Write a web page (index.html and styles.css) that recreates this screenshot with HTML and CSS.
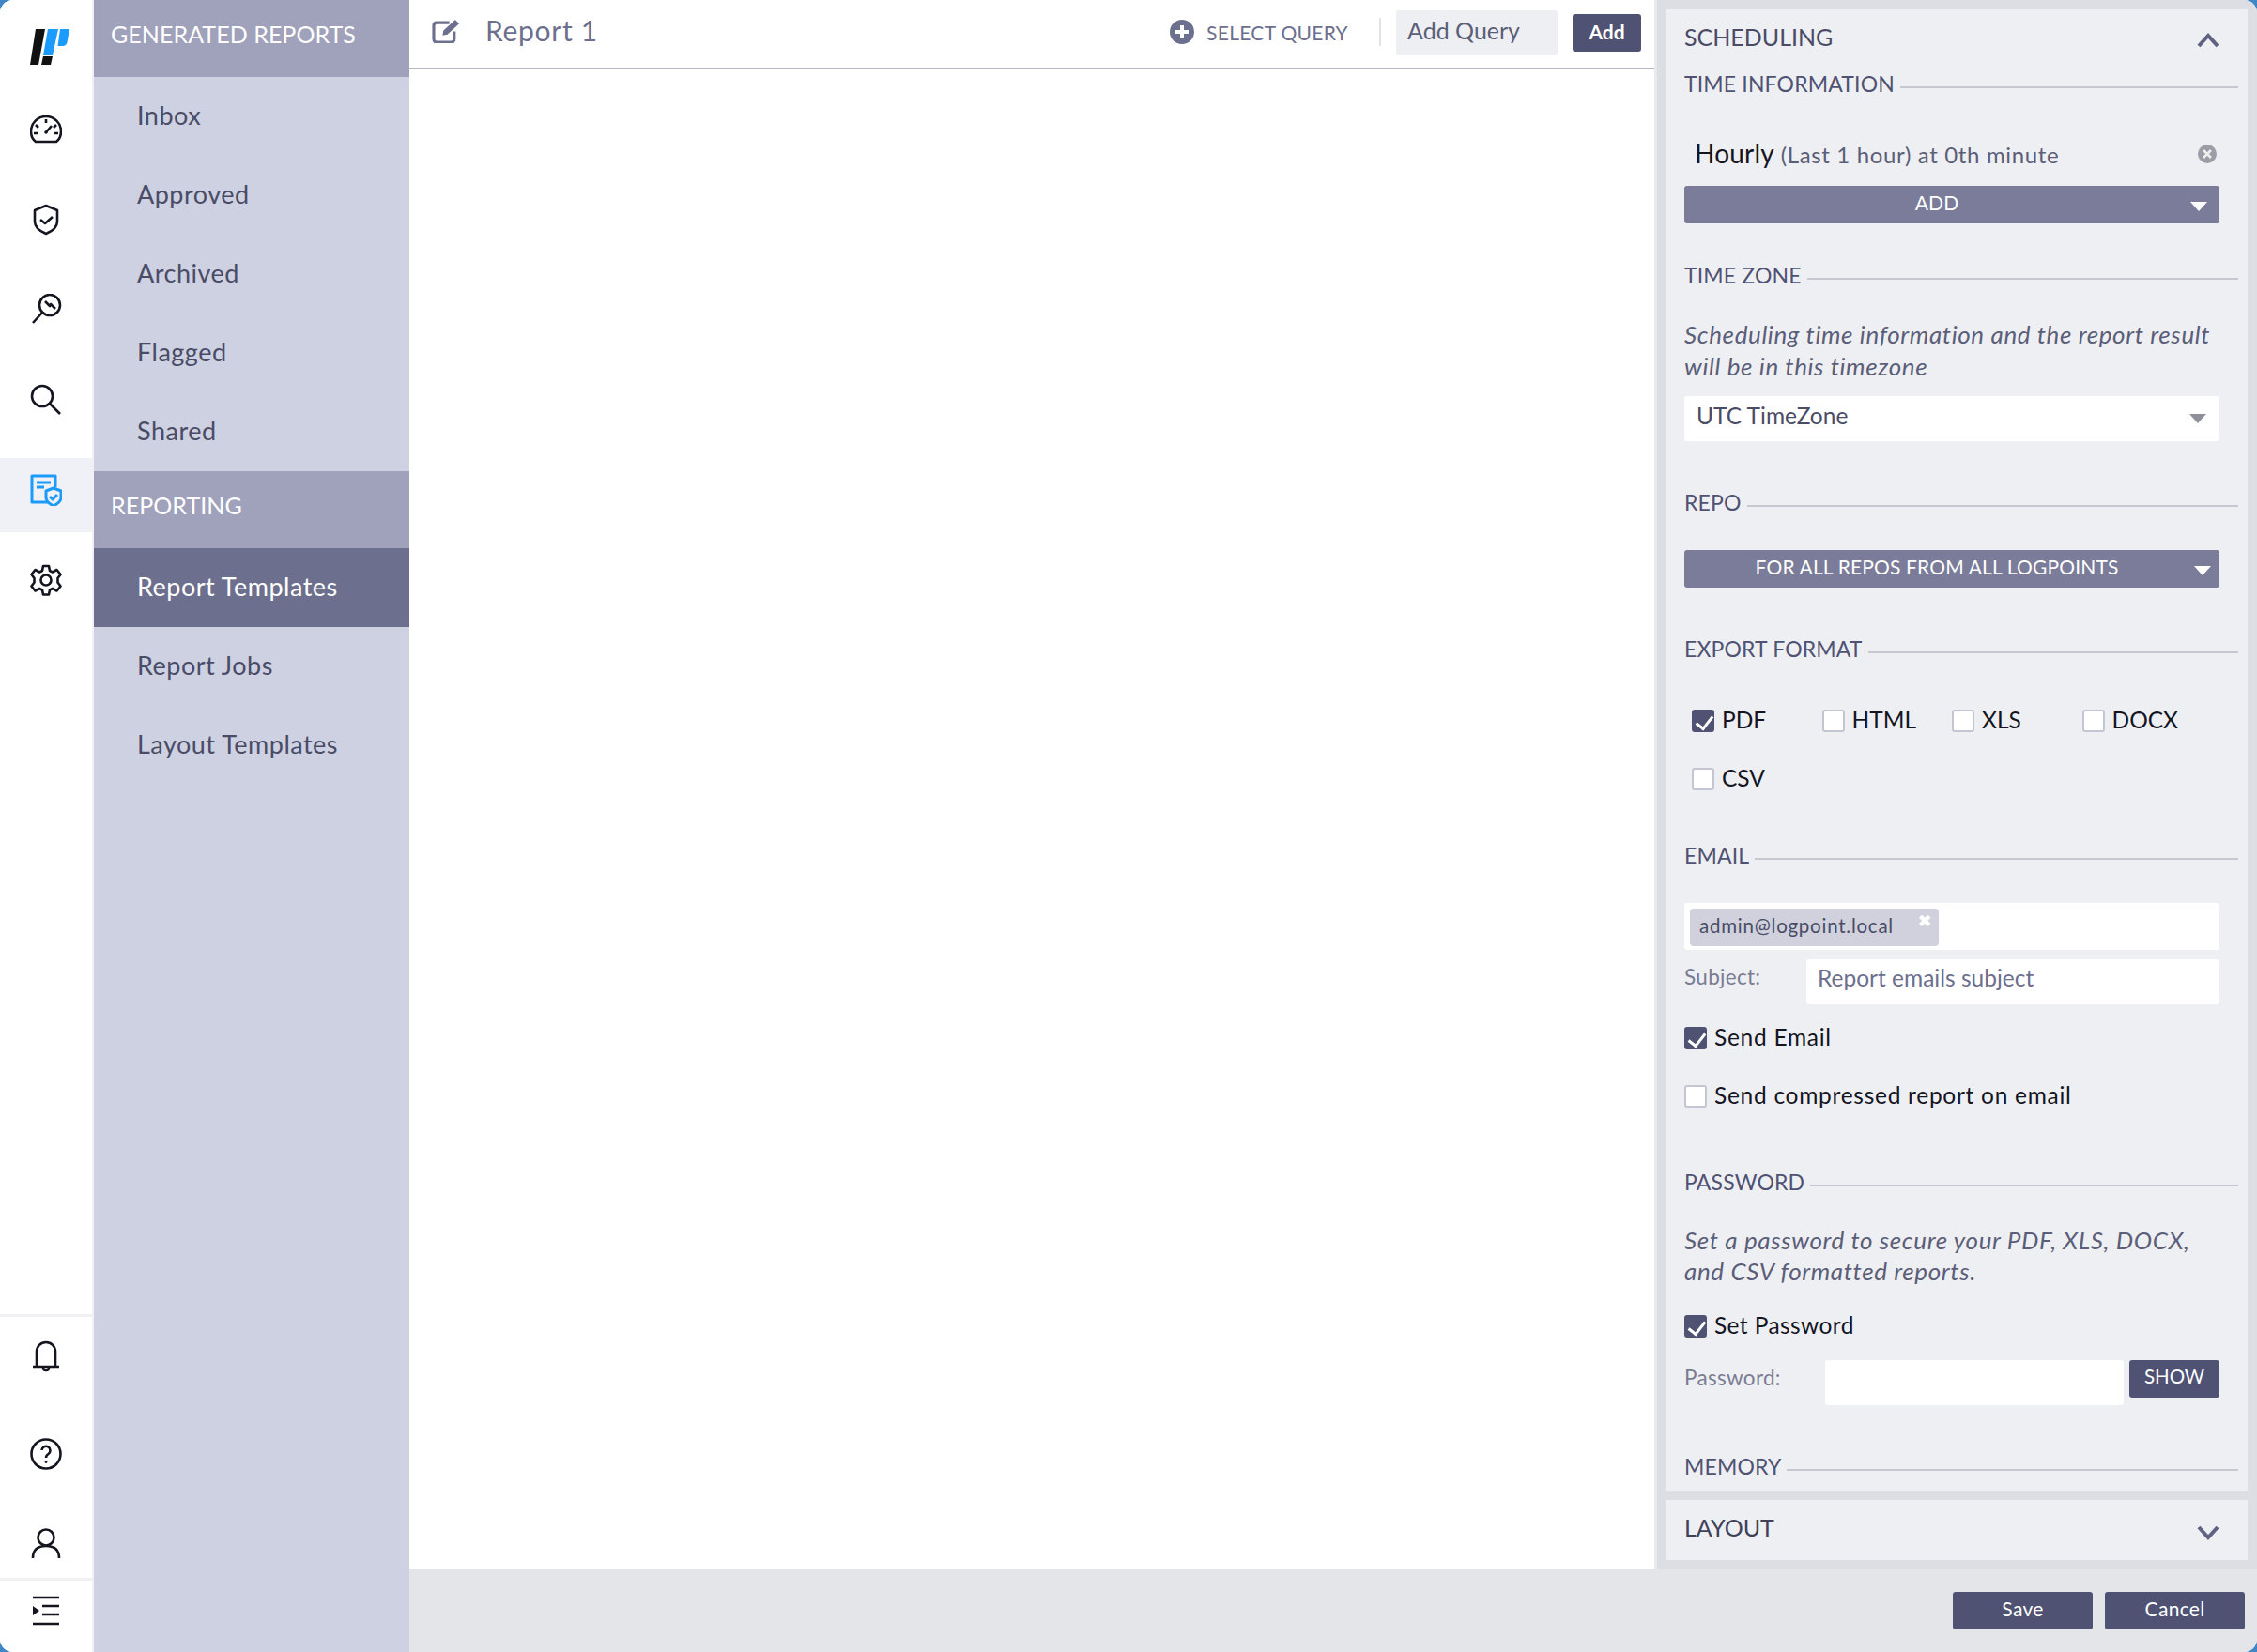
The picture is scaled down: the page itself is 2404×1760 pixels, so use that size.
FILE: index.html
```html
<!DOCTYPE html>
<html lang="en">
<head>
<meta charset="utf-8">
<title>Report 1</title>
<link rel="stylesheet" href="styles.css">
</head>
<body>
<div class="app">
  <nav class="rail">
    <div class="logo">
      <svg width="42" height="38" viewBox="0 0 42 38"><path d="M6 0h10L9 38H0z" fill="#111"/><path d="M19 0h11l-6 28H14z" fill="#1b9cfc"/><path d="M14 29h10l-2 9H12z" fill="#111"/><path d="M32 0h10l-2.500 14q-1 4-5 4h-5z" fill="#1b9cfc"/></svg>
    </div>
    <div class="rail-top">
      <a class="rail-item"><svg class="ico" viewBox="0 0 34 34"><path d="M6 30h22q5-4 5-11A16 16 0 0 0 1 19q0 7 5 11z"/><path d="M17 20l6-7M17 6v4M6 12l3 3M28 12l-3 3M4 21h4M26 21h4"/><circle cx="17" cy="20" r="1.800" class="fill"/></svg></a>
      <a class="rail-item"><svg class="ico" viewBox="0 0 34 34"><path d="M17 2l12 5v12q0 8-12 13Q5 27 5 19V7z"/><path d="M11 17l5 4 8-7"/></svg></a>
      <a class="rail-item"><svg class="ico" viewBox="0 0 34 34"><circle cx="21" cy="12" r="11"/><path d="M13 20L3 31M16 8l5 5 1-2 5 5"/></svg></a>
      <a class="rail-item"><svg class="ico" viewBox="0 0 34 34"><circle cx="13" cy="13" r="11"/><path d="M21 21l11 11"/></svg></a>
      <a class="rail-item rail-active"><svg class="ico ico-blue" viewBox="0 0 34 34"><path d="M20 30H2V2h25v12"/><path d="M7 9h15M7 14h8"/><path d="M25 15l8 3v7q0 5-8 9-8-4-8-9v-7z" fill="#f0f1f6"/><path d="M21 24l3 3 5-5"/></svg></a>
      <a class="rail-item"><svg class="ico" viewBox="0 0 34 34"><circle cx="17" cy="17" r="5.500"/><path d="M14 2h6l1 5 3 1.500 4.500-2.500 4 5-3 4v4.500l3 4-4 5-4.500-2.500-3 1.500-1 5h-6l-1-5-3-1.500-4.500 2.500-4-5 3-4v-4.500l-3-4 4-5 4.500 2.500 3-1.500z"/></svg></a>
    </div>
    <div class="rail-bottom">
      <a class="rail-low rail-bell"><svg class="ico" viewBox="0 0 34 34"><path d="M3 28h28M7 28V12a10 10 0 0 1 20 0v16M17 1v1M14 29q0 3 3 3t3-3"/></svg></a>
      <a class="rail-low rail-help"><svg class="ico" viewBox="0 0 34 34"><circle cx="17" cy="17" r="15.500"/><path d="M12.500 13a4.500 4.500 0 1 1 7 4q-2.500 1.500-2.500 4"/><circle cx="17" cy="25.500" r="1.400" class="fill"/></svg></a>
      <a class="rail-low rail-user"><svg class="ico" viewBox="0 0 34 34"><circle cx="17" cy="10" r="8.500"/><path d="M3 32q0-13 14-13t14 13"/></svg></a>
      <a class="rail-menu"><svg class="ico" viewBox="0 0 34 34"><path d="M3 3h28M13 12h18M13 21h18M3 31h28"/><path d="M3 12l7 5-7 5z" class="fill"/></svg></a>
    </div>
  </nav>

  <aside class="subnav">
    <div class="sub-head">GENERATED REPORTS</div>
    <a class="sub-item">Inbox</a>
    <a class="sub-item">Approved</a>
    <a class="sub-item">Archived</a>
    <a class="sub-item">Flagged</a>
    <a class="sub-item">Shared</a>
    <div class="sub-head">REPORTING</div>
    <a class="sub-item sub-current">Report Templates</a>
    <a class="sub-item">Report Jobs</a>
    <a class="sub-item">Layout Templates</a>
  </aside>

  <div class="work">
    <div class="work-body">
      <main class="main">
        <header class="topbar">
          <svg class="edit" viewBox="1 0 28 25"><path d="M23 13v8q0 3-3 3H5q-3 0-3-3V7q0-3 3-3h13"/><path d="M11 17l1-5L24 1l4 4-12 11z" class="solid"/></svg>
          <span class="report-name">Report 1</span>
          <span class="spacer"></span>
          <svg class="plus" viewBox="0 0 26 26"><circle cx="13" cy="13" r="13" fill="#6c6f8d"/><path d="M13 6v14M6 13h14" stroke="#fff" stroke-width="4"/></svg>
          <span class="select-query">SELECT QUERY</span>
          <span class="vsep"></span>
          <span class="query-input">Add Query</span>
          <button class="add-btn">Add</button>
        </header>
      </main>
      <section class="side">
        <div class="panel panel-open">
          <div class="panel-head">
            <span>SCHEDULING</span>
            <svg class="chev" viewBox="0 0 24 16"><path d="M2 14L12 3l10 11"/></svg>
          </div>

          <div class="sec sec-ti"><span>TIME INFORMATION</span><i></i></div>
          <div class="hourly"><b>Hourly</b> <span>(Last 1 hour) at 0th minute</span>
            <svg class="clear" viewBox="0 0 20 20"><circle cx="10" cy="10" r="10" fill="#9c9da6"/><path d="M6 6l8 8M14 6l-8 8" stroke="#eee" stroke-width="2.500"/></svg>
          </div>
          <div class="dropbar dropbar-add">ADD<em class="caret"></em></div>

          <div class="sec sec-tz"><span>TIME ZONE</span><i></i></div>
          <p class="hint hint-tz">Scheduling time information and the report result will be in this timezone</p>
          <div class="select">UTC TimeZone<em class="caret caret-grey"></em></div>

          <div class="sec sec-repo"><span>REPO</span><i></i></div>
          <div class="dropbar dropbar-repo">FOR ALL REPOS FROM ALL LOGPOINTS<em class="caret caret-repo"></em></div>

          <div class="sec sec-export"><span>EXPORT FORMAT</span><i></i></div>
          <div class="formats">
            <label class="check"><em class="box on"></em>PDF</label>
            <label class="check"><em class="box"></em>HTML</label>
            <label class="check"><em class="box"></em>XLS</label>
            <label class="check"><em class="box"></em>DOCX</label>
            <label class="check"><em class="box"></em>CSV</label>
          </div>

          <div class="sec sec-email"><span>EMAIL</span><i></i></div>
          <div class="tagfield"><span class="tag">admin@logpoint.local<b class="tag-x">✖</b></span></div>
          <div class="field-row field-subject">
            <span class="field-label">Subject:</span>
            <span class="input input-subject">Report emails subject</span>
          </div>
          <label class="check check-wide check-send"><em class="box on"></em>Send Email</label>
          <label class="check check-wide check-zip"><em class="box"></em>Send compressed report on email</label>

          <div class="sec sec-pass"><span>PASSWORD</span><i></i></div>
          <p class="hint hint-pass">Set a password to secure your PDF, XLS, DOCX, and CSV formatted reports.</p>
          <label class="check check-set"><em class="box on"></em>Set Password</label>
          <div class="field-row field-pass">
            <span class="field-label">Password:</span>
            <span class="input input-pass"></span>
            <button class="show-btn">SHOW</button>
          </div>

          <div class="sec sec-mem"><span>MEMORY</span><i></i></div>
        </div>
        <div class="panel panel-closed">
          <span>LAYOUT</span>
          <svg class="chev" viewBox="0 0 24 16"><path d="M2 2l10 11L22 2"/></svg>
        </div>
      </section>
    </div>
    <footer class="footer">
      <button class="foot-btn">Save</button>
      <button class="foot-btn">Cancel</button>
    </footer>
  </div>
</div>
</body>
</html>
```
FILE: styles.css
```css
* { box-sizing: border-box; }
html, body { margin: 0; padding: 0; background: #3f86c6; }
body { font-family: "Lato", "Liberation Sans", sans-serif; }
.app { display: flex; width: 2404px; height: 1760px; overflow: hidden; border-radius: 14px; background: #fff; }

.rail { width: 100px; flex: none; display: flex; flex-direction: column; background: #fff; border-right: 2px solid #f0f0f5; }
.logo { height: 90px; padding: 31px 0 0 32px; }
.logo svg { display: block; }
.rail-top { display: flex; flex-direction: column; }
.rail-item { display: flex; height: 96px; align-items: center; justify-content: center; }
.rail-active { height: 79px; margin: 14px 0 3px; padding-bottom: 12px; background: #f0f1f6; }
.rail-bottom { margin-top: auto; }
.rail-low { display: flex; align-items: center; justify-content: center; }
.rail-bell { height: 89px; border-top: 3px solid #f0f0f5; padding-bottom: 3px; }
.rail-help { height: 120px; }
.rail-user { height: 72px; }
.rail-menu { display: flex; align-items: center; justify-content: center; height: 79px; padding-bottom: 12px; border-top: 3px solid #f0f0f5; }
.ico { width: 34px; height: 34px; fill: none; stroke: #14151f; stroke-width: 2.600; stroke-linejoin: round; }
.ico .fill { fill: #14151f; stroke: none; }
.ico-blue { stroke: #1b9cfc; stroke-width: 3; }

.subnav { width: 336px; flex: none; background: #ced1e2; }
.sub-head { height: 82px; padding: 0 0 0 18px; line-height: 72px; font-size: 25px; letter-spacing: .05px; color: #fff; background: #a0a1bb; }
.sub-item { display: block; height: 84px; padding-left: 46px; line-height: 82px; font-size: 27px; letter-spacing: .5px; color: #4a4c66; }
.sub-current { background: #6c6f8d; color: #fff; }

.work { flex: 1; min-width: 0; display: flex; flex-direction: column; }
.work-body { flex: 1; min-height: 0; display: flex; }
.main { flex: 1; min-width: 0; background: #fff; }
.topbar { display: flex; align-items: center; height: 74px; padding: 0 14px 4px 24px; border-bottom: 2px solid #b8b8bc; }
.edit { width: 31px; height: 26px; margin-bottom: 3px; fill: none; stroke: #6c6f8d; stroke-width: 3; }
.edit .solid { fill: #6c6f8d; stroke: none; }
.report-name { margin: 0 0 4px 26px; font-size: 30px; letter-spacing: .7px; color: #6c6f8d; }
.spacer { flex: 1; }
.plus { width: 26px; height: 26px; }
.select-query { margin-left: 13px; font-size: 21px; letter-spacing: .3px; color: #6c6f8d; }
.vsep { width: 2px; height: 30px; margin: 0 16px 0 33px; background: #e2e3e8; }
.query-input { width: 172px; height: 48px; margin-top: 2px; padding-left: 12px; line-height: 42px; font-size: 25px; color: #5b5e78; background: #eeeff3; border-radius: 3px; }
.add-btn { width: 73px; height: 40px; margin: 2px 0 0 16px; padding: 0 0 4px; border: 0; border-radius: 3px; font: 700 21px "Lato", sans-serif; color: #fff; background: #4f5272; }

.side { width: 642px; flex: none; padding: 10px 10px 10px 9px; background: #dddee3; border-left: 3px solid #e9eaee; }
.panel { background: #eeeff3; }
.panel-open { height: 1578px; padding: 0 10px 0 20px; overflow: hidden; }
.panel-head { display: flex; align-items: center; justify-content: space-between; height: 58px; padding: 0 20px 0 0; font-size: 25px; color: #4a4c66; }
.chev { width: 24px; height: 16px; margin: 8px 0 0; fill: none; stroke: #5f6282; stroke-width: 4; }
.panel-closed { display: flex; align-items: center; justify-content: space-between; height: 64px; margin-top: 10px; padding: 0 30px 6px 20px; font-size: 25px; color: #3f4158; }
.panel-closed .chev { margin-top: 12px; }

.sec { display: flex; height: 28px; line-height: 28px; font-size: 23px; letter-spacing: .15px; color: #4f5272; }
.sec i { flex: 1; height: 2px; margin: 17px 0 0 6px; background: #c6c7cf; }
.sec-ti { margin-top: 7px; }
.sec-tz { margin-top: 41px; }
.sec-repo { margin-top: 51px; }
.sec-export { margin-top: 51px; }
.sec-email { margin-top: 55px; }
.sec-pass { margin-top: 65px; }
.sec-mem { margin-top: 51px; }

.hourly { position: relative; height: 48px; margin: 37px 20px 0 0; padding-left: 11px; line-height: 46px; font-size: 24px; letter-spacing: .65px; color: #5b5e78; }
.hourly b { font-weight: 400; font-size: 28px; letter-spacing: .2px; color: #14151f; }
.clear { position: absolute; right: 3px; top: 14px; width: 20px; height: 20px; }

.dropbar { position: relative; height: 40px; margin-right: 20px; text-align: center; font-size: 21px; letter-spacing: .15px; line-height: 36px; color: #fff; background: #7a7c99; border-radius: 3px; }
.dropbar-add { margin-top: 10px; padding-right: 32px; }
.dropbar-repo { margin-top: 37px; padding-right: 32px; }
.caret { position: absolute; right: 13px; top: 17px; width: 0; height: 0; border-style: solid; border-width: 10px 9px 0; border-color: #fff transparent transparent; }
.caret-repo { right: 9px; }
.caret-grey { border-top-color: #8e8f99; top: 19px; right: 14px; }

.hint { margin: 0 20px 0 0; font-size: 26px; letter-spacing: .62px; font-style: italic; color: #5b5e78; line-height: 34px; }
.hint-tz { margin-top: 32px; height: 68px; }
.hint-pass { margin-top: 32px; height: 67px; line-height: 33px; }

.select { position: relative; height: 48px; margin: 15px 20px 0 0; padding-left: 13px; line-height: 42px; font-size: 24.500px; color: #4a4c66; background: #fff; border-radius: 3px; }

.formats { display: grid; grid-template-columns: repeat(4, 138.500px); row-gap: 38px; margin-top: 51px; padding-left: 8px; }
.check { display: flex; align-items: flex-start; height: 24px; font-size: 24.500px; line-height: 21px; color: #14151f; }
.check-wide { letter-spacing: .72px; }
.box { flex: none; position: relative; width: 24px; height: 24px; margin-right: 8px; background: #fff; border: 2px solid #c4c5d2; border-radius: 3px; }
.box.on { background: #4f5272; border-color: #4f5272; }
.box.on::after { content: ""; position: absolute; left: 6px; top: 1px; width: 8px; height: 15px; border: solid #fff; border-width: 0 3px 3px 0; transform: rotate(38deg); }

.tagfield { height: 50px; margin: 37px 20px 0 0; padding: 6px; background: #fff; border-radius: 3px; }
.tag { position: relative; display: block; width: 265px; height: 40px; padding-left: 10px; line-height: 36px; font-size: 20.500px; letter-spacing: .75px; color: #4a4c66; background: #d0d1dc; border-radius: 4px; }
.tag-x { position: absolute; right: 7px; top: -2px; font-size: 17px; color: #fff; line-height: 30px; }

.field-row { display: flex; margin-right: 20px; }
.field-subject { margin-top: 10px; }
.field-pass { margin-top: 24px; }
.field-label { font-size: 22.500px; letter-spacing: .3px; line-height: 38px; color: #7a7c92; }
.input { height: 48px; background: #fff; border-radius: 3px; }
.input-subject { width: 440px; margin-left: auto; padding-left: 12px; line-height: 40px; font-size: 24.500px; color: #6c6f8d; }
.input-pass { width: 318px; margin-left: auto; }
.show-btn { width: 96px; height: 40px; margin-left: 6px; padding: 0 0 6px; border: 0; border-radius: 3px; font: 400 20.500px "Lato", sans-serif; color: #fff; background: #4f5272; }

.check-send { margin-top: 24px; }
.check-zip { margin-top: 38px; }
.check-set { margin-top: 29px; letter-spacing: .4px; }

.footer { display: flex; justify-content: flex-end; gap: 13px; height: 88px; padding: 24px 13px 0 0; background: #e4e5e9; }
.foot-btn { width: 149px; height: 40px; padding: 0 0 6px; border: 0; border-radius: 3px; font: 400 21px "Lato", sans-serif; letter-spacing: .3px; color: #fff; background: #4f5272; }
```
